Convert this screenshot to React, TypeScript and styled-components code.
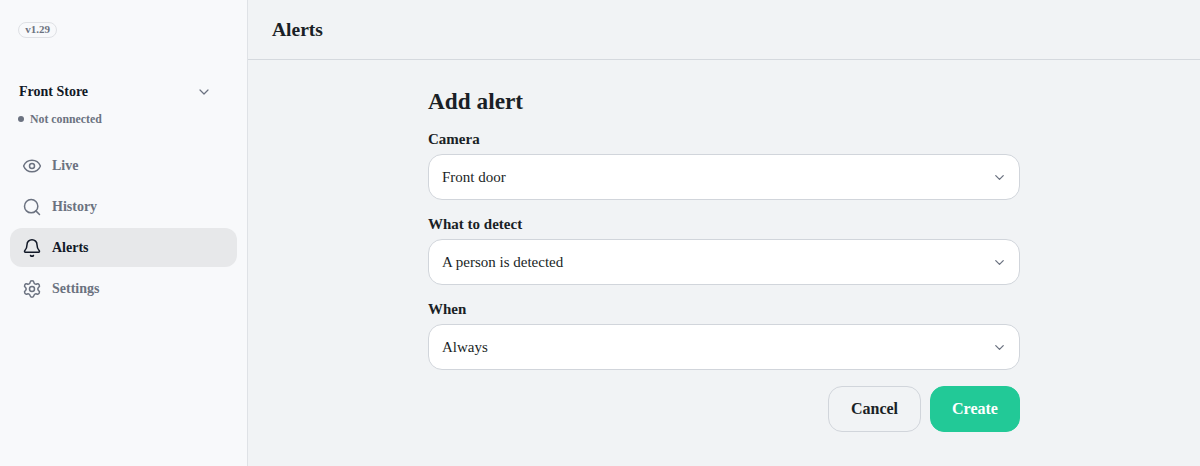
import React from "react";
import styled, { createGlobalStyle } from "styled-components";
import { Eye, Search, Bell, Settings, ChevronDown } from "lucide-react";

const Global = createGlobalStyle`
  html, body { margin: 0; padding: 0; height: 100%; }
  body { font-family: "Liberation Serif", "Times New Roman", serif; background: #f1f3f5; overflow: hidden; }
  #root { height: 100%; }
  * { box-sizing: border-box; }
`;

const Shell = styled.div`
  display: flex;
  width: 1200px;
  height: 466px;
`;

const Sidebar = styled.aside`
  width: 248px;
  flex: none;
  background: #f8f9fb;
  border-right: 1px solid #dfe2e6;
  padding: 22px 10px 0;
  display: flex;
  flex-direction: column;
`;

const Version = styled.span`
  align-self: flex-start;
  margin-left: 8px;
  height: 16px;
  width: 39px;
  text-align: center;
  border: 1px solid #dfe1e5;
  border-radius: 8px;
  font-size: 11px;
  line-height: 13px;
  font-weight: 700;
  color: #6b7280;
`;

const StoreRow = styled.div`
  display: flex;
  align-items: center;
  justify-content: space-between;
  margin-top: 45px;
  padding: 0 25px 0 9px;
  height: 18px;
  font-size: 14px;
  font-weight: 700;
  color: #111827;
  svg { color: #6b7280; }
`;

const Status = styled.div`
  display: flex;
  align-items: center;
  gap: 6px;
  margin: 11px 0 0 8px;
  height: 14px;
  font-size: 11.8px;
  font-weight: 700;
  color: #6b7280;
`;

const Dot = styled.span`
  width: 6px;
  height: 6px;
  border-radius: 50%;
  background: #6b7280;
`;

const Nav = styled.nav`
  display: flex;
  flex-direction: column;
  gap: 2px;
  margin-top: 20px;
`;

const NavItem = styled.a<{ $active?: boolean }>`
  display: flex;
  align-items: center;
  gap: 10.5px;
  height: 39px;
  padding: 0 11.5px;
  border-radius: 12px;
  font-size: 14px;
  font-weight: 700;
  color: ${(p) => (p.$active ? "#111827" : "#6b7280")};
  background: ${(p) => (p.$active ? "#e7e8ea" : "transparent")};
`;

const Main = styled.main`
  flex: 1;
  display: flex;
  flex-direction: column;
  min-width: 0;
`;

const Header = styled.header`
  height: 60px;
  flex: none;
  display: flex;
  align-items: center;
  padding: 0 24px;
  border-bottom: 1px solid #d5d9de;
  font-size: 19.5px;
  font-weight: 700;
  color: #1a1f26;
`;

const Form = styled.form`
  width: 592px;
  margin: 0 auto;
  padding-top: 27px;
  display: flex;
  flex-direction: column;
`;

const Title = styled.h1`
  margin: 0 0 16px;
  font-size: 23.3px;
  line-height: 28px;
  font-weight: 700;
  color: #1a1f26;
`;

const Field = styled.div`
  display: flex;
  flex-direction: column;
  gap: 6px;
  margin-bottom: 16px;
`;

const Label = styled.label`
  font-size: 15px;
  line-height: 17px;
  font-weight: 700;
  color: #1a1f26;
`;

const Select = styled.div`
  height: 46px;
  display: flex;
  align-items: center;
  justify-content: space-between;
  padding: 0 12.5px 0 13px;
  background: #fff;
  border: 1px solid #d1d5db;
  border-radius: 14px;
  font-size: 15px;
  color: #1a1f26;
  svg { color: #6b7280; }
`;

const Actions = styled.div`
  display: flex;
  justify-content: flex-end;
  gap: 9px;
`;

const Button = styled.button<{ $primary?: boolean }>`
  height: 46px;
  padding: 0;
  width: ${(p) => (p.$primary ? "90px" : "93px")};
  border-radius: 14px;
  border: 1px solid ${(p) => (p.$primary ? "#22c997" : "#d1d5db")};
  background: ${(p) => (p.$primary ? "#22c997" : "transparent")};
  color: ${(p) => (p.$primary ? "#fff" : "#1a1f26")};
  font-family: inherit;
  font-size: 16px;
  font-weight: 700;
`;

const nav = [
  { label: "Live", Icon: Eye },
  { label: "History", Icon: Search },
  { label: "Alerts", Icon: Bell, active: true },
  { label: "Settings", Icon: Settings },
];

const fields = [
  { label: "Camera", value: "Front door" },
  { label: "What to detect", value: "A person is detected" },
  { label: "When", value: "Always" },
];

export default function App() {
  return (
    <Shell>
      <Global />
      <Sidebar>
        <Version>v1.29</Version>
        <StoreRow>
          Front Store
          <ChevronDown size={16} strokeWidth={1.8} />
        </StoreRow>
        <Status>
          <Dot />
          Not connected
        </Status>
        <Nav>
          {nav.map(({ label, Icon, active }) => (
            <NavItem key={label} $active={active}>
              <Icon size={20} strokeWidth={1.8} />
              {label}
            </NavItem>
          ))}
        </Nav>
      </Sidebar>
      <Main>
        <Header>Alerts</Header>
        <Form>
          <Title>Add alert</Title>
          {fields.map((f) => (
            <Field key={f.label}>
              <Label>{f.label}</Label>
              <Select>
                {f.value}
                <ChevronDown size={15} strokeWidth={2} />
              </Select>
            </Field>
          ))}
          <Actions>
            <Button type="button">Cancel</Button>
            <Button type="button" $primary>Create</Button>
          </Actions>
        </Form>
      </Main>
    </Shell>
  );
}
